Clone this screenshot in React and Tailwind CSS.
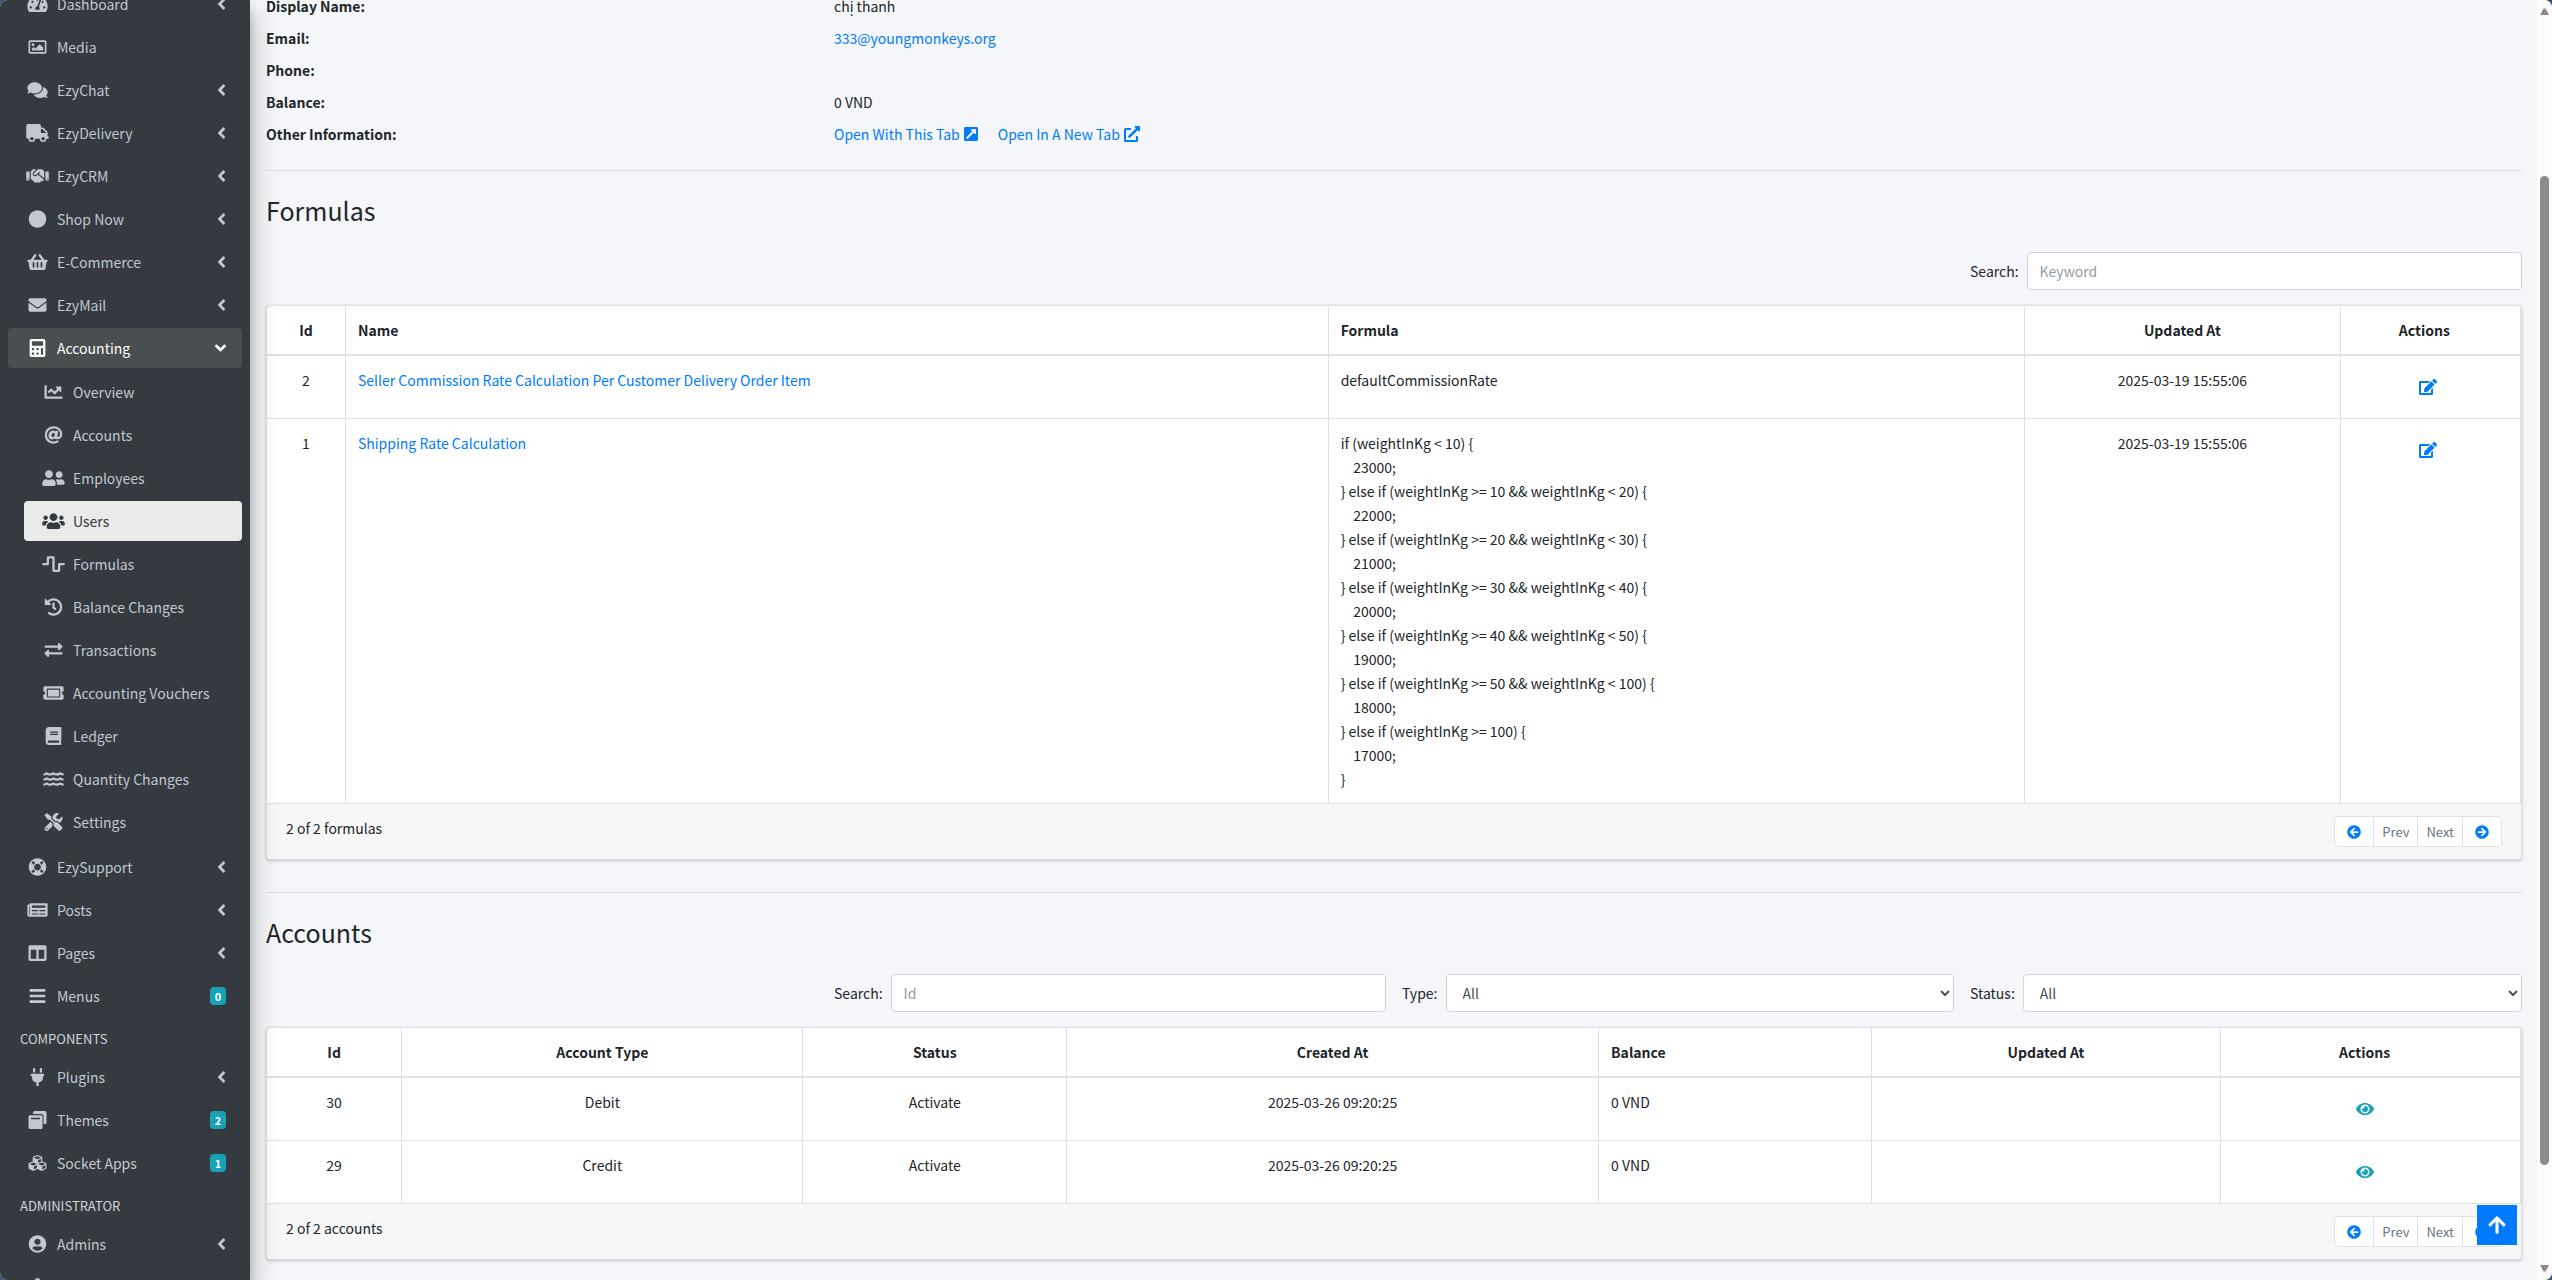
import {
  FaTachometerAlt, FaRegImage, FaComments, FaTruck, FaHandshake, FaCircle, FaShoppingBasket,
  FaEnvelope, FaCalculator, FaChartLine, FaAt, FaUserFriends, FaUsers, FaWaveSquare, FaHistory,
  FaExchangeAlt, FaTicketAlt, FaBook, FaWater, FaTools, FaLifeRing, FaNewspaper, FaColumns,
  FaBars, FaPlug, FaCubes, FaUserCircle, FaCog, FaAngleLeft, FaAngleDown, FaEdit, FaEye,
  FaArrowCircleLeft, FaArrowCircleRight, FaArrowUp, FaExternalLinkSquareAlt, FaExternalLinkAlt,
} from 'react-icons/fa'

function ThemesIcon({ className }) {
  return (
    <svg viewBox="0 0 18 18" fill="currentColor" className={className} aria-hidden="true">
      <path d="M6 0h10.500A1.500 1.500 0 0 1 18 1.500V11.500A1.500 1.500 0 0 1 16.500 13H15V5.500A2.500 2.500 0 0 0 12.500 3H4.500V1.500A1.500 1.500 0 0 1 6 0z" />
      <path fillRule="evenodd" d="M1.500 4.200h11A1.500 1.500 0 0 1 14 5.700V16.500A1.500 1.500 0 0 1 12.500 18h-11A1.500 1.500 0 0 1 0 16.500V5.700A1.500 1.500 0 0 1 1.500 4.200zM2.500 6.800v1.500h9V6.800z" />
    </svg>
  )
}

const mainItems = [
  { label: 'Dashboard', icon: FaTachometerAlt, arrow: true },
  { label: 'Media', icon: FaRegImage },
  { label: 'EzyChat', icon: FaComments, arrow: true },
  { label: 'EzyDelivery', icon: FaTruck, arrow: true },
  { label: 'EzyCRM', icon: FaHandshake, arrow: true },
  { label: 'Shop Now', icon: FaCircle, arrow: true },
  { label: 'E-Commerce', icon: FaShoppingBasket, arrow: true },
  { label: 'EzyMail', icon: FaEnvelope, arrow: true },
  {
    label: 'Accounting',
    icon: FaCalculator,
    arrow: true,
    children: [
      { label: 'Overview', icon: FaChartLine },
      { label: 'Accounts', icon: FaAt },
      { label: 'Employees', icon: FaUserFriends },
      { label: 'Users', icon: FaUsers, active: true },
      { label: 'Formulas', icon: FaWaveSquare },
      { label: 'Balance Changes', icon: FaHistory },
      { label: 'Transactions', icon: FaExchangeAlt },
      { label: 'Accounting Vouchers', icon: FaTicketAlt },
      { label: 'Ledger', icon: FaBook },
      { label: 'Quantity Changes', icon: FaWater },
      { label: 'Settings', icon: FaTools },
    ],
  },
  { label: 'EzySupport', icon: FaLifeRing, arrow: true },
  { label: 'Posts', icon: FaNewspaper, arrow: true },
  { label: 'Pages', icon: FaColumns, arrow: true },
  { label: 'Menus', icon: FaBars, badge: 0 },
]

const componentItems = [
  { label: 'Plugins', icon: FaPlug, arrow: true },
  { label: 'Themes', icon: ThemesIcon, badge: 2 },
  { label: 'Socket Apps', icon: FaCubes, badge: 1 },
]

const adminItems = [
  { label: 'Admins', icon: FaUserCircle, arrow: true },
  { label: 'Settings', icon: FaCog, iconOnly: true },
]

const shippingFormula = `if (weightInKg < 10) {
    23000;
} else if (weightInKg >= 10 && weightInKg < 20) {
    22000;
} else if (weightInKg >= 20 && weightInKg < 30) {
    21000;
} else if (weightInKg >= 30 && weightInKg < 40) {
    20000;
} else if (weightInKg >= 40 && weightInKg < 50) {
    19000;
} else if (weightInKg >= 50 && weightInKg < 100) {
    18000;
} else if (weightInKg >= 100) {
    17000;
}`

const formulas = [
  {
    id: 2,
    name: 'Seller Commission Rate Calculation Per Customer Delivery Order Item',
    formula: 'defaultCommissionRate',
    updatedAt: '2025-03-19 15:55:06',
  },
  { id: 1, name: 'Shipping Rate Calculation', formula: shippingFormula, updatedAt: '2025-03-19 15:55:06' },
]

const accounts = [
  { id: 30, type: 'Debit', status: 'Activate', createdAt: '2025-03-26 09:20:25', balance: '0 VND', updatedAt: '' },
  { id: 29, type: 'Credit', status: 'Activate', createdAt: '2025-03-26 09:20:25', balance: '0 VND', updatedAt: '' },
]

function NavItem({ item }) {
  const { label, icon: Icon, arrow, badge, active, iconOnly, children } = item
  let tone = 'text-[#c2c7d0]'
  if (children) tone = 'bg-[#494e51] text-white'
  if (active) tone = 'bg-[#e9ebea] text-[#343a40]'

  return (
    <li>
      <a
        href="#"
        aria-label={iconOnly ? label : undefined}
        className={`mb-[3px] flex h-10 items-center gap-[7px] rounded px-4 ${tone}`}
      >
        <span className="ml-px flex w-[25px] shrink-0 justify-center">
          <Icon className="h-[18px] w-[23px]" />
        </span>
        {!iconOnly && <span className="grow whitespace-nowrap">{label}</span>}
        {arrow && (children ? <FaAngleDown className="h-[18px] w-[11px]" /> : <FaAngleLeft className="h-[18px] w-[9px]" />)}
        {badge !== undefined && (
          <span className="flex h-[18px] w-4 items-center justify-center rounded bg-[#17a2b8] text-[11px] font-bold text-white">
            {badge}
          </span>
        )}
      </a>
      {children && (
        <ul className="pt-px pb-[2px] pl-4">
          {children.map((child) => (
            <NavItem key={child.label} item={child} />
          ))}
        </ul>
      )}
    </li>
  )
}

function NavHeader({ children }) {
  return <h2 className="px-3 pt-[10px] pb-2 text-[13px] leading-5 text-[#d0d4db]">{children}</h2>
}

function Sidebar() {
  return (
    <aside className="relative z-10 w-[250px] shrink-0 bg-[#343a40] shadow-[0_14px_28px_rgba(0,0,0,0.25),0_10px_10px_rgba(0,0,0,0.22)]">
      <nav className="-mt-4 px-2">
        <ul>{mainItems.map((item) => <NavItem key={item.label} item={item} />)}</ul>
        <NavHeader>COMPONENTS</NavHeader>
        <ul>{componentItems.map((item) => <NavItem key={item.label} item={item} />)}</ul>
        <NavHeader>ADMINISTRATOR</NavHeader>
        <ul>{adminItems.map((item) => <NavItem key={item.label} item={item} />)}</ul>
      </nav>
    </aside>
  )
}

function Detail({ label, children }) {
  return (
    <div className="grid grid-cols-4 gap-x-4">
      <dt className="font-bold">{label}</dt>
      <dd className="col-span-3">{children}</dd>
    </div>
  )
}

function Th({ width, left, last, children }) {
  return (
    <th
      scope="col"
      className={`border-r border-b-2 border-[#dee2e6] py-3 pl-3 font-bold ${width} ${left ? 'text-left' : 'text-center'} ${last ? 'pr-6' : 'pr-3'}`}
    >
      {children}
    </th>
  )
}

function Td({ left, last, children }) {
  return (
    <td
      className={`border-r border-b border-[#dee2e6] py-3 pl-3 align-top ${left ? 'text-left' : 'text-center'} ${last ? 'pr-6' : 'pr-3'}`}
    >
      {children}
    </td>
  )
}

function Pager() {
  return (
    <div className="flex h-[31px] divide-x divide-[#dee2e6] rounded-sm border border-[#dee2e6] bg-white text-[13px] text-[#6c757d]">
      <button type="button" aria-label="First page" className="px-3 text-[#007bff]">
        <FaArrowCircleLeft className="size-[14px]" />
      </button>
      <button type="button" className="px-2">Prev</button>
      <button type="button" className="px-2">Next</button>
      <button type="button" aria-label="Last page" className="px-3 text-[#007bff]">
        <FaArrowCircleRight className="size-[14px]" />
      </button>
    </div>
  )
}

function Card({ summary, children }) {
  return (
    <section className="overflow-hidden rounded border border-[#dfe1e5] bg-white shadow-[0_0_1px_rgba(0,0,0,0.13),0_1px_3px_rgba(0,0,0,0.2)]">
      {children}
      <footer className="flex h-[55px] items-start justify-between bg-[#f7f7f7] px-[19px] py-3">
        <span>{summary}</span>
        <Pager />
      </footer>
    </section>
  )
}

const fieldClass = 'h-[38px] min-w-0 grow rounded border border-[#ced4da] bg-white px-3 text-[#495057] placeholder:text-[#939ba2]'

function FormulasTable() {
  return (
    <Card summary="2 of 2 formulas">
      <table className="w-full table-fixed border-separate border-spacing-0">
        <thead>
          <tr>
            <Th width="w-[78px]">Id</Th>
            <Th width="w-[43.6%]" left>Name</Th>
            <Th width="w-[30.9%]" left>Formula</Th>
            <Th width="w-[14%]">Updated At</Th>
            <Th width="w-[8%]" last>Actions</Th>
          </tr>
        </thead>
        <tbody>
          {formulas.map((row) => (
            <tr key={row.id}>
              <Td>{row.id}</Td>
              <Td left><a href="#" className="text-[#007bff]">{row.name}</a></Td>
              <Td left><div className="whitespace-pre-wrap">{row.formula}</div></Td>
              <Td>{row.updatedAt}</Td>
              <Td last>
                <button type="button" aria-label="Edit" className="ml-2 inline-flex h-[38px] items-center align-top text-[#007bff]">
                  <FaEdit className="h-4 w-[18px]" />
                </button>
              </Td>
            </tr>
          ))}
        </tbody>
      </table>
    </Card>
  )
}

function AccountsTable() {
  return (
    <Card summary="2 of 2 accounts">
      <table className="w-full table-fixed border-separate border-spacing-0">
        <thead>
          <tr>
            <Th width="w-[6%]">Id</Th>
            <Th width="w-[17.8%]">Account Type</Th>
            <Th width="w-[11.7%]">Status</Th>
            <Th width="w-[23.6%]">Created At</Th>
            <Th width="w-[12.1%]" left>Balance</Th>
            <Th width="w-[15.5%]">Updated At</Th>
            <Th width="w-[13.3%]" last>Actions</Th>
          </tr>
        </thead>
        <tbody>
          {accounts.map((row) => (
            <tr key={row.id}>
              <Td>{row.id}</Td>
              <Td>{row.type}</Td>
              <Td>{row.status}</Td>
              <Td>{row.createdAt}</Td>
              <Td left>{row.balance}</Td>
              <Td>{row.updatedAt}</Td>
              <Td last>
                <button type="button" aria-label="View" className="inline-flex h-[38px] items-center align-top text-[#17a2b8]">
                  <FaEye className="h-4 w-[18px]" />
                </button>
              </Td>
            </tr>
          ))}
        </tbody>
      </table>
    </Card>
  )
}

function Scrollbar() {
  return (
    <div className="flex w-[15px] shrink-0 flex-col items-center bg-[#fcfcfc] py-[7px] text-[#8b8b8b]" aria-hidden="true">
      <svg viewBox="0 0 9 9" fill="currentColor" className="size-[9px]"><path d="M3.500 1.500h2L9 8H0z" /></svg>
      <div className="mt-40 mb-auto h-[78.1%] w-[9px] rounded-full bg-[#8b8b8b]" />
      <svg viewBox="0 0 9 9" fill="currentColor" className="size-[9px]"><path d="M3.500 7.500h2L9 1H0z" /></svg>
    </div>
  )
}

export default function App() {
  return (
    <div className="bg-[#3d5675]">
      <div className="flex h-screen overflow-hidden rounded-lg bg-[#f4f6f9] font-['Noto_Sans_CJK_SC','Noto_Sans',sans-serif] text-[14px] leading-6 text-[#212529]">
        <Sidebar />

        <main className="min-w-0 grow pr-[15px] pl-4">
          <dl className="-mt-[6px] space-y-2">
            <Detail label="Display Name:">chị thanh</Detail>
            <Detail label="Email:"><a href="#" className="text-[#007bff]">333@youngmonkeys.org</a></Detail>
            <Detail label="Phone:" />
            <Detail label="Balance:">0 VND</Detail>
            <Detail label="Other Information:">
              <span className="flex gap-5 text-[#007bff]">
                <a href="#" className="flex items-center gap-1">Open With This Tab <FaExternalLinkSquareAlt className="h-4 w-[14px]" /></a>
                <a href="#" className="flex items-center gap-1">Open In A New Tab <FaExternalLinkAlt className="size-4" /></a>
              </span>
            </Detail>
          </dl>

          <hr className="mt-6 mb-[23px] border-[#dbdde1]" />
          <h2 className="text-[25px] leading-8">Formulas</h2>
          <div className="mt-[26px] mb-[15px] grid grid-cols-4 items-center gap-4">
            <div className="col-start-4 flex items-center gap-2">
              <label htmlFor="formula-keyword">Search:</label>
              <input id="formula-keyword" type="text" placeholder="Keyword" className={fieldClass} />
            </div>
          </div>
          <FormulasTable />

          <hr className="mt-8 mb-[23px] border-[#dbdde1]" />
          <h2 className="text-[25px] leading-8">Accounts</h2>
          <div className="mt-[26px] mb-[15px] grid grid-cols-4 items-center gap-4">
            <div className="col-start-2 flex items-center gap-2">
              <label htmlFor="account-id">Search:</label>
              <input id="account-id" type="text" placeholder="Id" className={fieldClass} />
            </div>
            <div className="flex items-center gap-2">
              <label htmlFor="account-type">Type:</label>
              <select id="account-type" className={fieldClass}><option>All</option></select>
            </div>
            <div className="flex items-center gap-2">
              <label htmlFor="account-status">Status:</label>
              <select id="account-status" className={fieldClass}><option>All</option></select>
            </div>
          </div>
          <AccountsTable />
        </main>

        <Scrollbar />

        <button
          type="button"
          aria-label="Back to top"
          className="fixed right-[35px] bottom-[35px] flex size-10 items-center justify-center bg-[#007bff] text-white"
        >
          <FaArrowUp className="size-5" />
        </button>
      </div>
    </div>
  )
}
